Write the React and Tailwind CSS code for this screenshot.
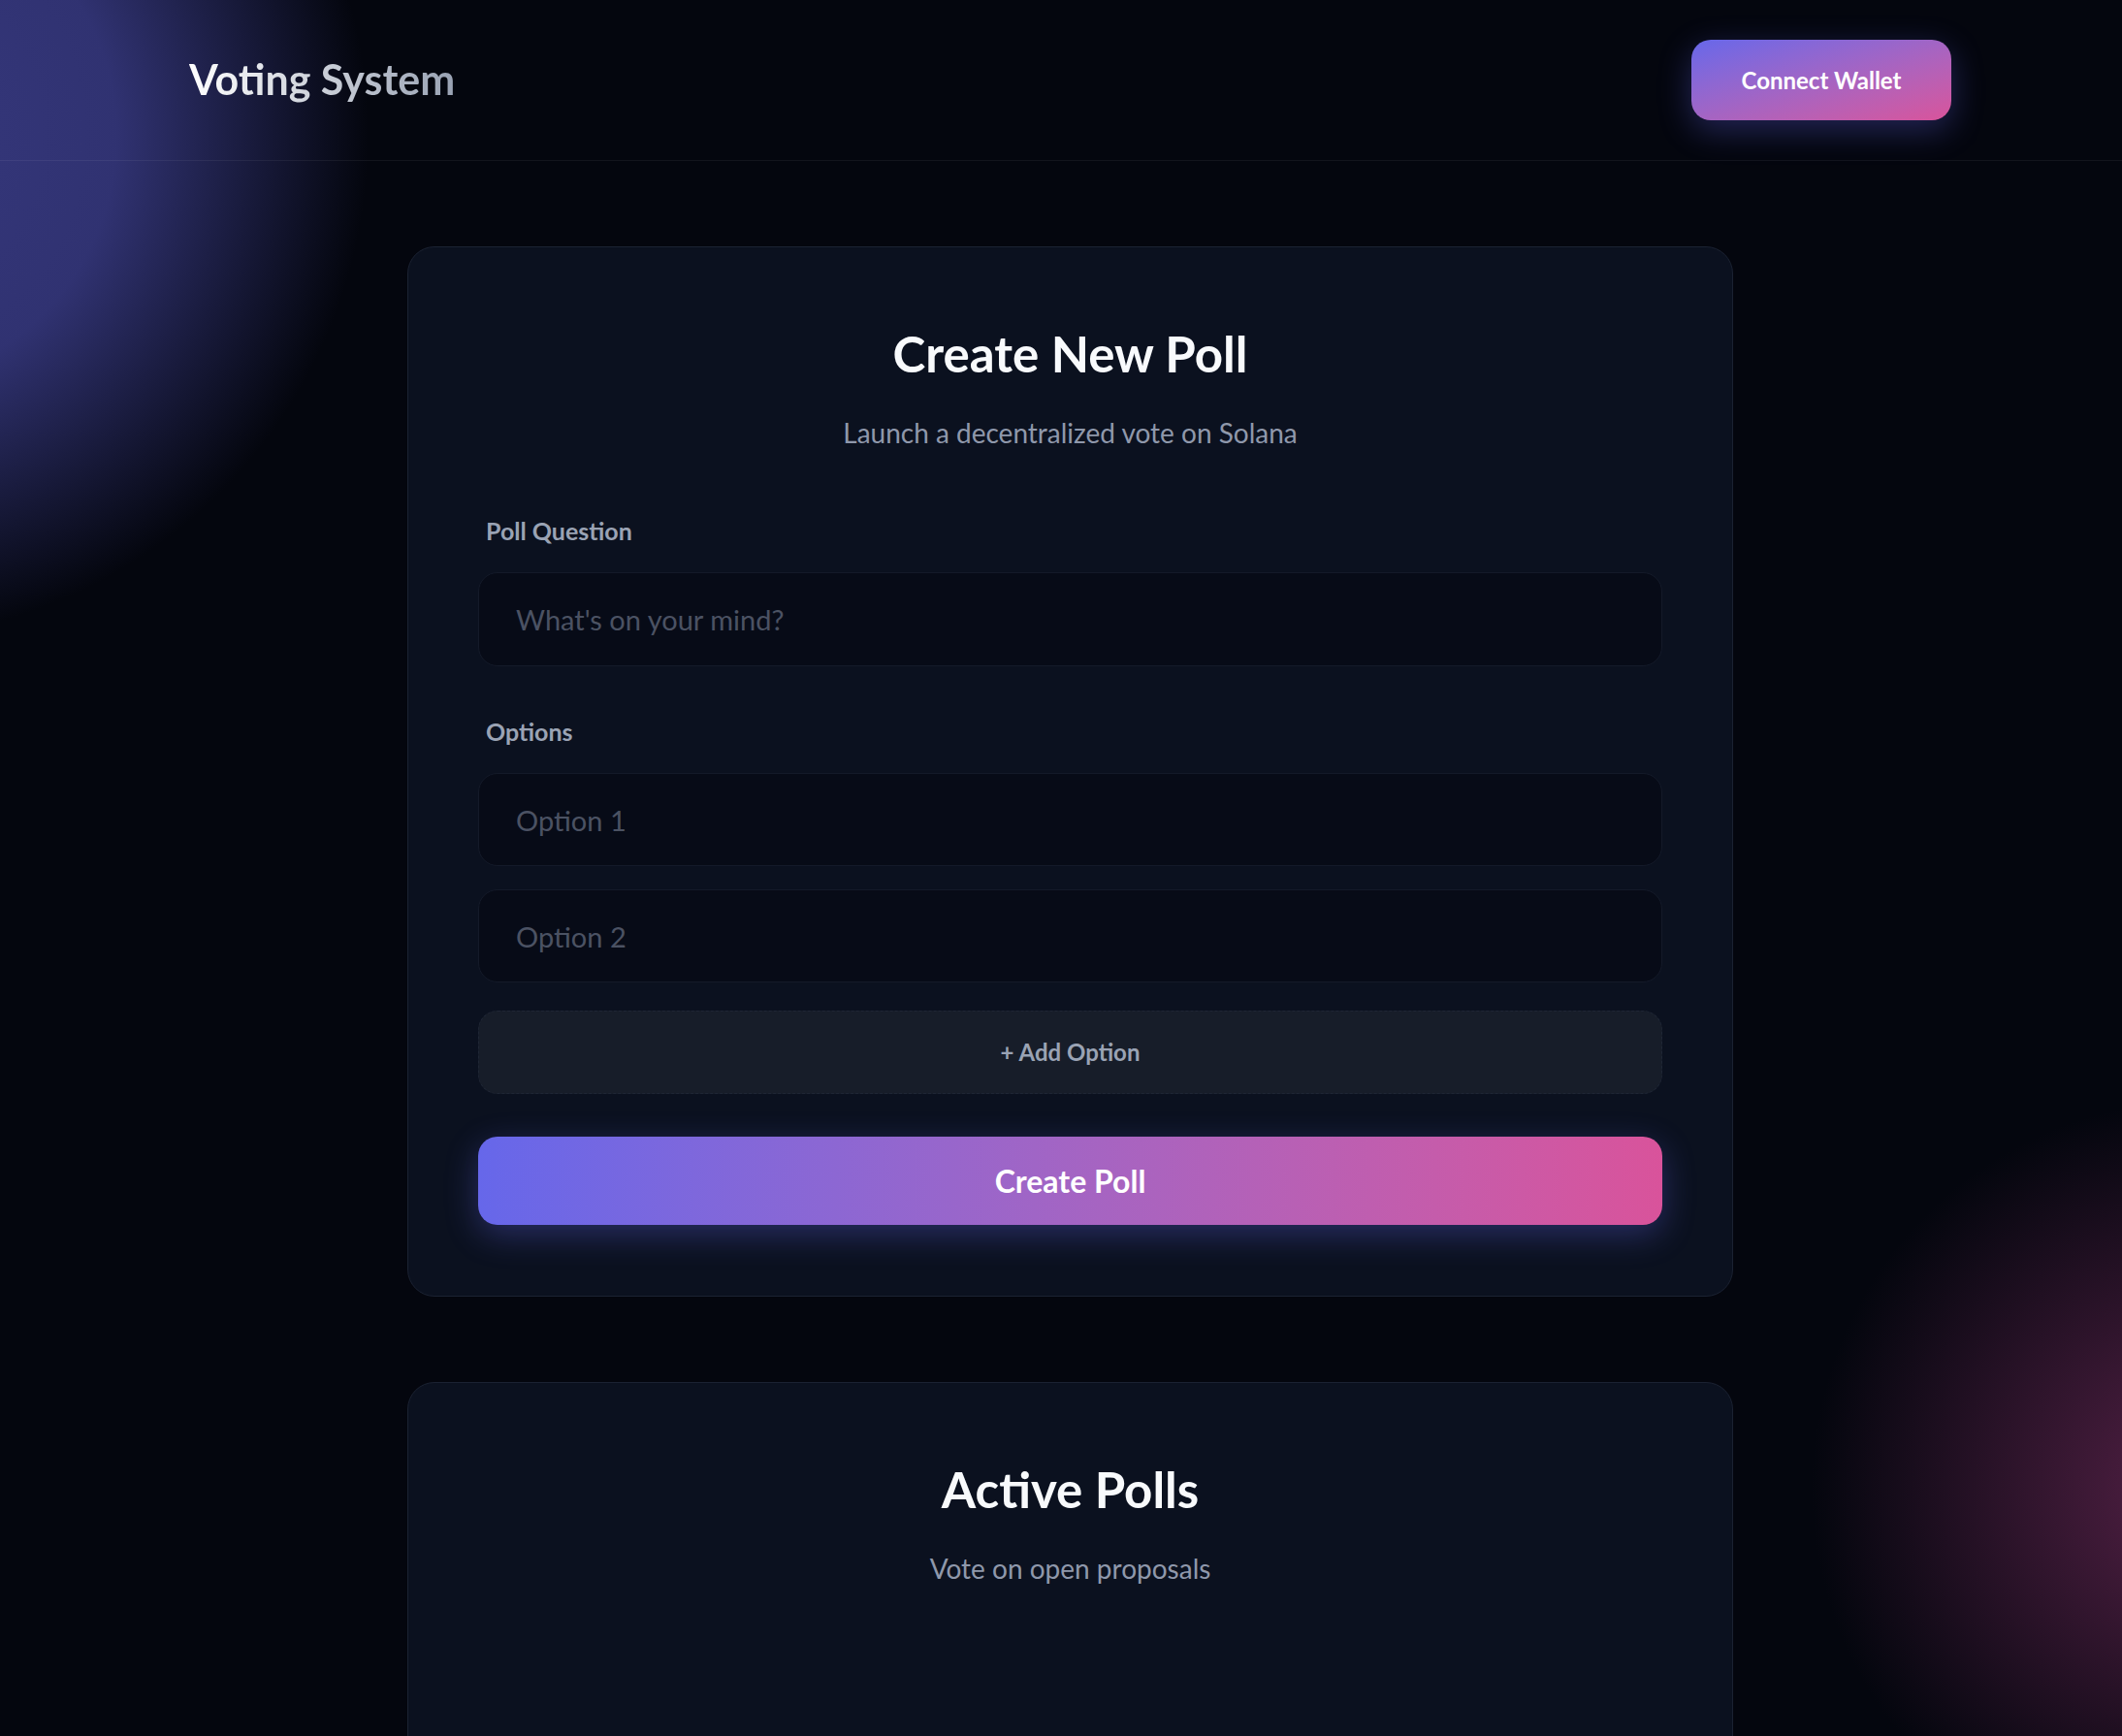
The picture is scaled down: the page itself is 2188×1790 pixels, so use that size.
import React from 'react';

function GradientButton({ children, className }) {
  return (
    <button
      type="button"
      className={`from-[#6667ea] to-[#d9539b] text-white shadow-[0_10px_34px_rgba(99,102,241,0.33)] ${className}`}
    >
      {children}
    </button>
  );
}

function Field({ placeholder }) {
  return (
    <input
      type="text"
      placeholder={placeholder}
      className="h-full w-full rounded-[20px] border border-[#141a29] bg-[#070b17] px-[38px] text-[29px] text-white outline-none placeholder:text-[#4b5263]"
    />
  );
}

function CardHeading({ title, subtitle }) {
  return (
    <div className="text-center">
      <h2 className="text-[51px] font-bold leading-[60px] text-[#f8fafc]">{title}</h2>
      <p className="mt-[33px] text-[28px] leading-[36px] text-[#8f98ab]">{subtitle}</p>
    </div>
  );
}

export default function App() {
  return (
    <div className="relative min-h-screen overflow-hidden bg-[#04060e] font-['Lato',sans-serif]">
      {/* background glows */}
      <div className="pointer-events-none absolute left-[-660px] top-[-380px] h-[1040px] w-[1040px] bg-[radial-gradient(circle_closest-side,rgba(54,56,126,1)_0%,rgba(52,54,122,0.92)_50%,rgba(4,6,14,0)_100%)]" />
      <div className="pointer-events-none absolute right-[-480px] top-[1135px] h-[800px] w-[800px] bg-[radial-gradient(circle_closest-side,rgba(84,32,70,1)_0%,rgba(76,30,64,0.78)_30%,rgba(4,6,14,0)_100%)]" />

      {/* Header */}
      <header className="relative flex h-[166px] items-center justify-between border-b border-white/[0.06] pl-[195px] pr-[176px]">
        <h1 className="bg-linear-to-r from-white to-[#99a2b3] bg-clip-text text-[43px] font-bold text-transparent">
          Voting System
        </h1>
        <GradientButton className="h-[83px] w-[268px] rounded-[20px] bg-linear-to-br text-[24px] font-bold">
          Connect Wallet
        </GradientButton>
      </header>

      <main className="relative flex flex-col items-center gap-[88px] pb-[120px] pl-[19px] pt-[88px]">
        {/* Create poll */}
        <section className="w-[1367px] rounded-[28px] border border-[#1b2232] bg-[#0b111f] px-[72px] pb-[73px] pt-[80px]">
          <CardHeading title="Create New Poll" subtitle="Launch a decentralized vote on Solana" />

          <form className="mt-[67px] flex flex-col" onSubmit={(e) => e.preventDefault()}>
            <label className="block pl-[8px] text-[25px] font-bold leading-[32px] text-[#9aa3b4]">
              Poll Question
            </label>
            <div className="mt-[27px] h-[97px]">
              <Field placeholder="What's on your mind?" />
            </div>

            <label className="mt-[51px] block pl-[8px] text-[25px] font-bold leading-[32px] text-[#9aa3b4]">
              Options
            </label>
            <div className="mt-[27px] flex flex-col gap-[24px]">
              <div className="h-[96px]">
                <Field placeholder="Option 1" />
              </div>
              <div className="h-[96px]">
                <Field placeholder="Option 2" />
              </div>
            </div>

            <button
              type="button"
              className="mt-[29px] h-[86px] w-full rounded-[20px] border border-dashed border-[#1f2635] bg-[#171d29] text-[24px] font-bold text-[#9aa3b4]"
            >
              + Add Option
            </button>

            <GradientButton className="mt-[44px] h-[91px] w-full rounded-[20px] bg-linear-to-r text-[32px] font-bold">
              Create Poll
            </GradientButton>
          </form>
        </section>

        {/* Active polls */}
        <section className="h-[720px] w-[1367px] rounded-[28px] border border-[#1b2232] bg-[#0b111f] px-[72px] pt-[80px]">
          <CardHeading title="Active Polls" subtitle="Vote on open proposals" />
        </section>
      </main>
    </div>
  );
}
